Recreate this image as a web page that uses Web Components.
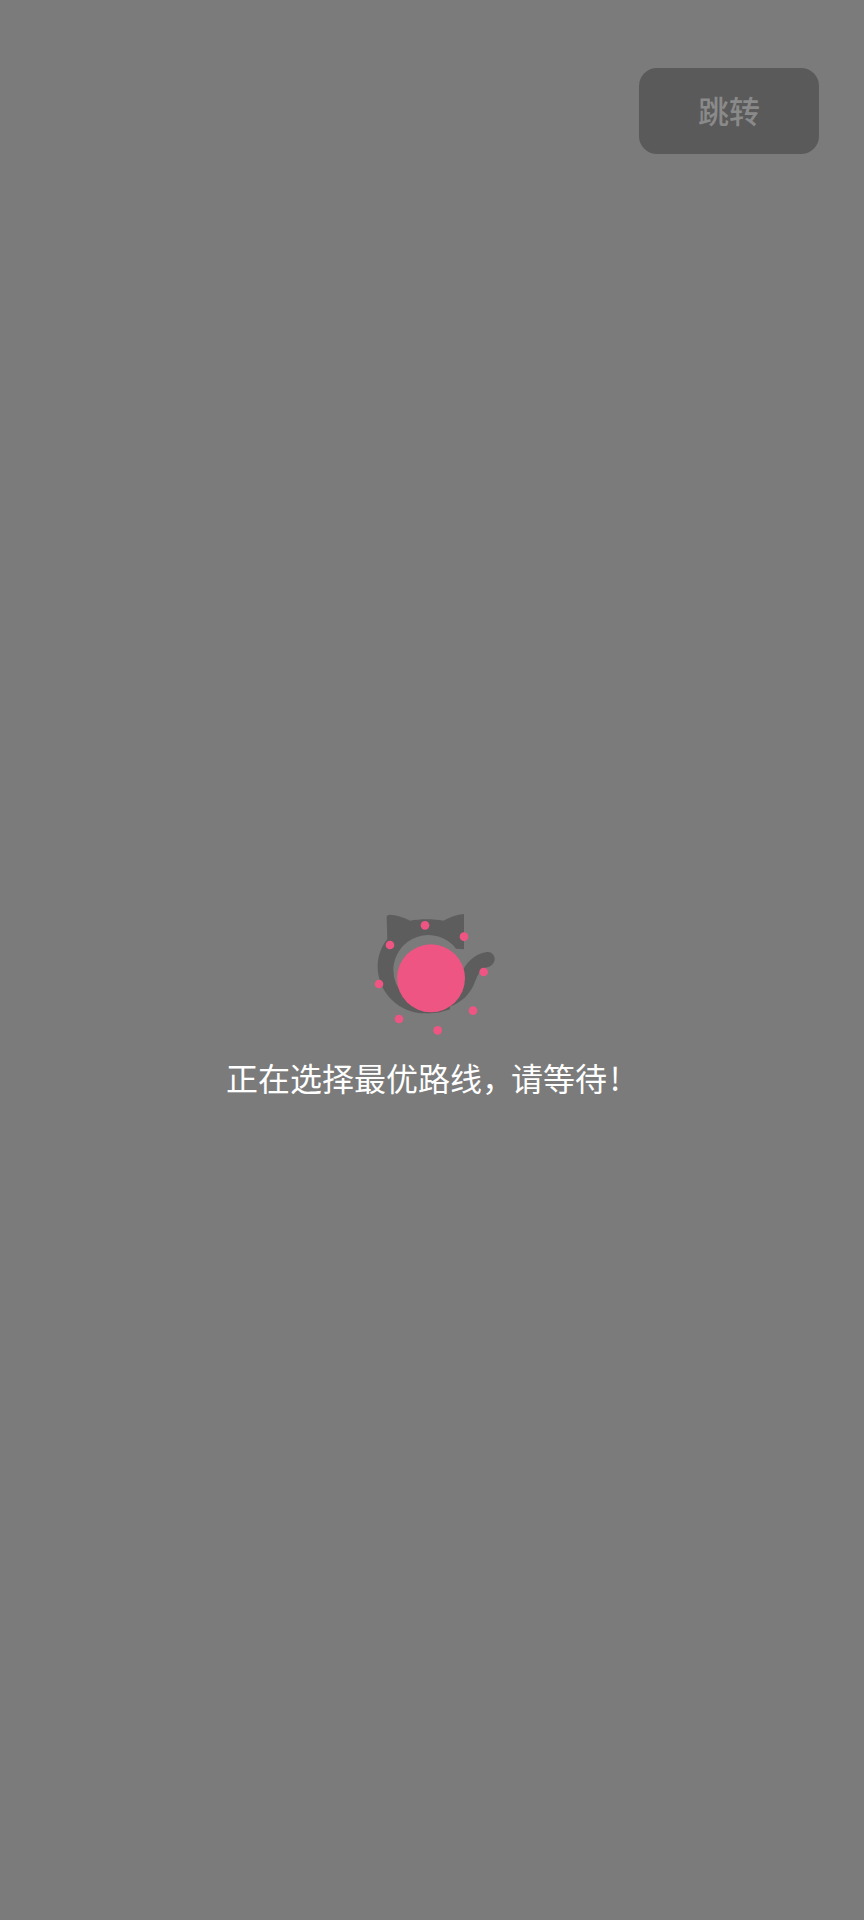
<!DOCTYPE html>
<html lang="zh">
<head>
<meta charset="utf-8">
<title>跳转</title>
<style>
  html, body { margin: 0; padding: 0; background: #7b7b7b; }
</style>
</head>
<body>
<splash-screen>
  <skip-button slot="action">跳转</skip-button>
  <cat-loader slot="loader"></cat-loader>
  <span slot="message">正在选择最优路线<span style="letter-spacing:-3px">，</span>请等<span style="letter-spacing:3px">待</span>!</span>
</splash-screen>

<script>
class SplashScreen extends HTMLElement {
  constructor() {
    super();
    this.attachShadow({ mode: "open" });
  }

  connectedCallback() {
    this.shadowRoot.innerHTML = /* html */ `
      <style>
        :host {
          display: flex;
          flex-direction: column;
          box-sizing: border-box;
          width: 864px;
          height: 1920px;
          padding-top: 68px;
          background: #7b7b7b;
          font-family: "Noto Sans CJK SC", "Noto Sans", sans-serif;
        }
        .top {
          display: flex;
          justify-content: flex-end;
          padding-right: 45px;
        }
        .center {
          display: flex;
          flex-direction: column;
          align-items: flex-start;
          margin-top: 736px;
          padding-left: 226px;
        }
        .loader {
          display: block;
          margin-left: 124px;
        }
        .message {
          margin-top: 3px;
          color: #fff;
          font-size: 32px;
          line-height: 48px;
          white-space: nowrap;
        }
      </style>
      <div class="top"><slot name="action"></slot></div>
      <div class="center">
        <div class="loader"><slot name="loader"></slot></div>
        <div class="message"><slot name="message"></slot></div>
      </div>
    `;
  }
}

class SkipButton extends HTMLElement {
  constructor() {
    super();
    this.attachShadow({ mode: "open" });
  }

  connectedCallback() {
    this.shadowRoot.innerHTML = /* html */ `
      <style>
        :host {
          display: flex;
          align-items: center;
          justify-content: center;
          width: 180px;
          height: 86px;
          padding-bottom: 4px;
          box-sizing: border-box;
          border-radius: 18px;
          background: #5a5a5a;
          color: #8a8a8a;
          font-size: 31px;
          font-weight: 500;
          line-height: 1;
        }
      </style>
      <slot></slot>
    `;
  }
}

class CatLoader extends HTMLElement {
  constructor() {
    super();
    this.attachShadow({ mode: "open" });
  }

  connectedCallback() {
    const dots = [
      [225, 106], [342, 140], [401, 246], [369, 362],
      [263, 421], [147, 387], [87, 282], [120, 165],
    ].map(([x, y]) => `<circle cx="${x}" cy="${y}" r="13"/>`).join("");

    this.shadowRoot.innerHTML = /* html */ `
      <style>
        :host {
          display: block;
          width: 160px;
          height: 160px;
        }
        svg { display: block; filter: blur(0.4px); }
      </style>
      <svg width="160" height="160" viewBox="0 0 480 480" aria-hidden="true">
        <path fill="#5d5d5d" d="M110 82 Q110 74 120 74 C145 76 165 84 180 92 C210 86 250 86 280 92 C300 82 320 74 342 72 L342 178 L318 176 A105 105 0 0 0 130 240 A105 105 0 0 0 235 345 L300 340 L300 358 C275 368 250 371 225 370 C148 370 83 307 83 230 C83 200 93 170 112 148 Z"/>
        <path fill="#5d5d5d" d="M335 250 C345 220 375 190 410 186 C428 184 437 200 433 212 C430 225 418 231 405 233 C390 237 382 257 370 287 C355 318 330 338 300 350 Z"/>
        <circle cx="243" cy="265" r="102" fill="#ee5583"/>
        <g fill="#ee5583">${dots}</g>
      </svg>
    `;
  }
}

customElements.define("splash-screen", SplashScreen);
customElements.define("skip-button", SkipButton);
customElements.define("cat-loader", CatLoader);
</script>
</body>
</html>
